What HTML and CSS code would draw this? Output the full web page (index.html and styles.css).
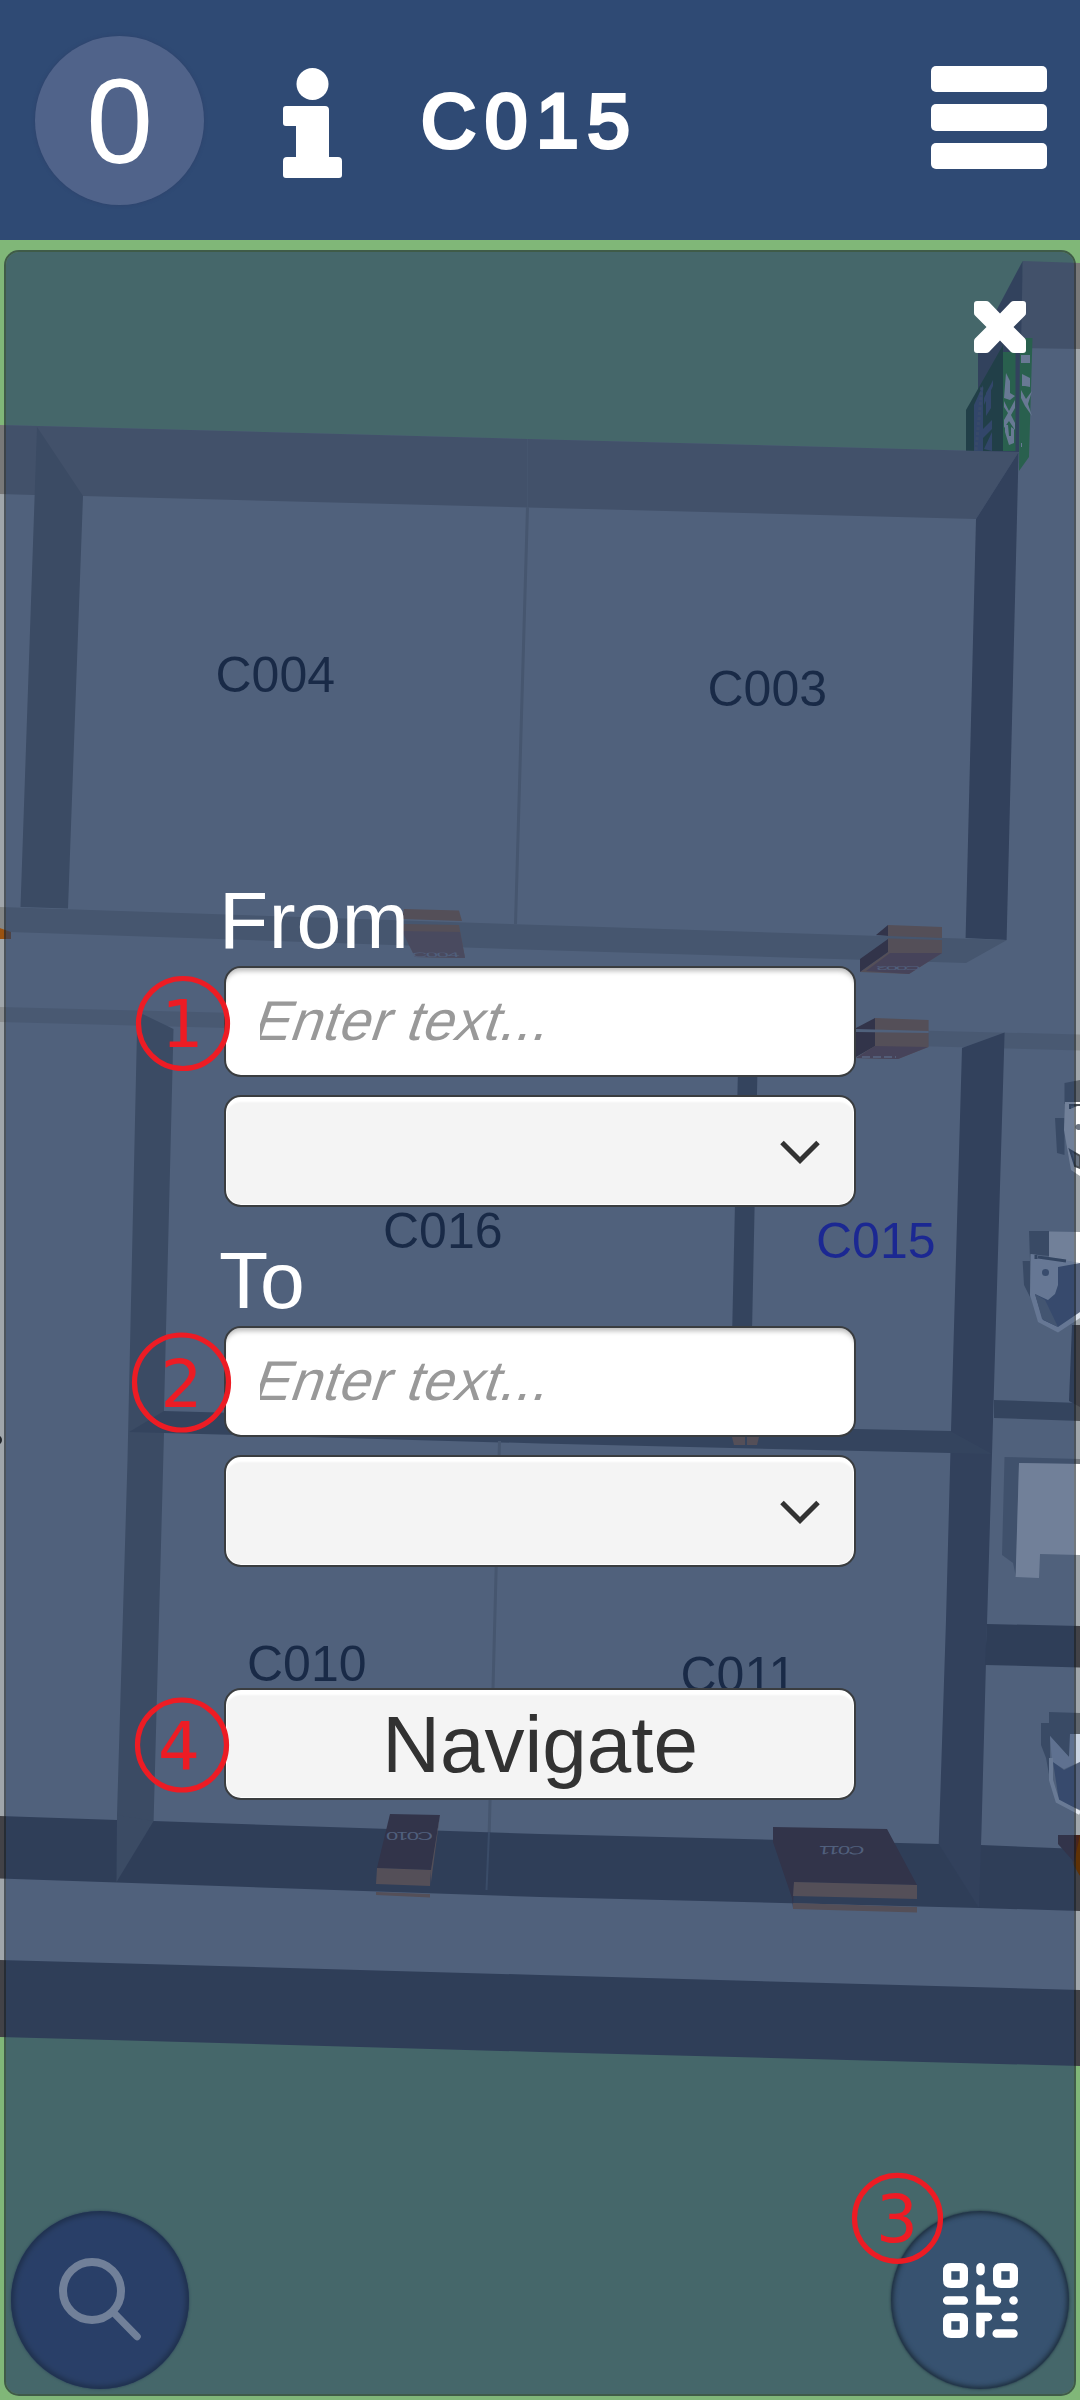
FILE: index.html
```html
<!DOCTYPE html>
<html lang="en">
<head>
<meta charset="utf-8">
<title>Indoor navigation</title>
<link rel="stylesheet" href="styles.css">
</head>
<body>
<header class="topbar">
  <div class="counter">0</div>
  <svg class="info" width="60" height="110" viewBox="0 0 60 110" fill="#fff">
    <circle cx="29.500" cy="16" r="16"/>
    <path d="M3 38H42a4 4 0 0 1 4 4V89H55a4 4 0 0 1 4 4V107a3 3 0 0 1-3 3H3a3 3 0 0 1-3-3V93a4 4 0 0 1 4-4H13V58H3a3 3 0 0 1-3-3V41a3 3 0 0 1 3-3Z"/>
  </svg>
  <h1 class="room">C015</h1>
  <div class="menu"><i></i><i></i><i></i></div>
</header>

<main class="stage">
  <svg class="map" viewBox="0 240 1080 2160" width="1080" height="2160">
    <rect class="grass" y="240" width="1080" height="2160"/>
    <!-- floor -->
    <path class="floor" d="M0 425L1019 452V346L1080 348V1995L0 1963Z"/>
    <!-- upper right block and exit signs -->
    <path class="wall-top" d="M1022.700 261L1080 263V349L1019 348Z"/>
    <path class="wall-mid" d="M1022.700 261L978 345V452H1019Z"/>
    <path class="sign-dark" d="M966 410L1003 345V451H966Z"/>
    <path class="sign-mark" d="M974 405l9-20v66h-9zM986 393l5-9v24l-5 8zM976 436l16-16v9l-16 16zM984 398l9-18v6l-9 19zM984 449l8-17v19z"/>
    <path d="M976 450L982 386" stroke="#5d6675" stroke-width="3" stroke-dasharray="3 2"/>
    <path class="sign" d="M1003 352h12.500V451H1003ZM1020 338H1032.500L1029 457L1019 471Z"/>
    <path class="sign-text" d="M1006 373l4 8v12l5 3-5 4-6-2zM1004 401l5 10 6-11v8l-4 7 4 8v7l-6-9-5 7v-8l4-7-4-6zM1005 425l3 0 1 11 2 0 0-9 3 2v14l-5 2-4-13zM1021 355h9v8h-9zM1022 374l8 4v9l-5-1-3 0zM1021 390l5 9 6-8-4 13 4 12-7-10-4-8zM1021 443h1v4h-1z"/>
    <!-- upper rooms -->
    <path class="wall-top" d="M0 425L1018.600 452L976 519L83 496L34 495L0 494Z"/>
    <path class="wall-left" d="M37 427L83 496L68 908.500L20.500 907Z"/>
    <path class="wall-right" d="M1018.600 452L976 519L965.600 938L1006.600 940Z"/>
    <path d="M527.500 439V507" stroke="#828484"/>
    <path d="M527.500 507L515.500 924" stroke="#838686" stroke-width="3"/>
    <!-- corridor -->
    <path class="low" d="M0 907L540 925L1007 940L966 963L540 950L10 932L0 928Z"/>
    <path class="low2" d="M0 1007L1080 1034.500V1050.500L0 1022Z"/>
    <!-- lower left wall -->
    <path class="wall-left" d="M142.500 1014L173.500 1029L164 1411V1433L153.600 1821L116.500 1882L117 1815L127.500 1460L137 1030Z"/>
    <path class="wall-low" d="M164 1411L856 1429L951 1431L992 1455L950 1453L540 1443.500L164 1433L129 1432Z"/>
    <path class="wall-low" d="M738.500 1045H758L750 1428H730Z"/>
    <path d="M499.500 1441L489 1840L487 1890" fill="none" stroke="#838686" stroke-width="3"/>
    <!-- bottom walls -->
    <path class="wall-bottom" d="M0 1816L117 1820L153.600 1821L540 1834L939 1844L981 1845L1080 1849V1911L979 1908L540 1897L0 1878.500Z"/>
    <path class="wall-left" d="M117 1815L153.600 1821L116.500 1882Z"/>
    <path d="M489 1832L486.500 1890" stroke="#636a72" stroke-width="2"/>
    <path class="wall-bottom" d="M0 1960L540 1975L1080 1990V2066L540 2052L0 2037Z"/>
    <path class="wall-right" d="M1004.600 1032.500L962 1048L951 1431L946 1620L938.700 1844L979 1908L981.500 1830L987 1624L992 1454Z"/>
    <path class="wall-low" d="M950 1431L992 1454L950 1453Z"/>
    <!-- washroom -->
    <path class="wall-low" d="M994 1400L1080 1403V1421L994 1418Z"/>
    <path class="wall-bottom" d="M987 1624L1080 1626V1667.500L985 1665Z"/>
    <path class="wall-bottom" d="M1072 1325H1080V1407L1069 1401Z"/>
    <path class="shade" d="M1064.500 1083L1080 1080V1104H1064.500V1155L1057 1153L1055 1118H1064.500Z"/>
    <path class="white" d="M1065 1102H1080V1176L1071 1170L1064 1130Z"/>
    <path d="M1070 1109V1105H1080M1070 1150L1080 1156V1168L1075 1166Z" fill="#6b7583" stroke="#4c5157" stroke-width="2"/>
    <circle cx="1078.500" cy="1127" r="3" fill="#6f7784"/>
    <path class="shade" d="M1029 1231H1049V1256L1030 1254V1297L1024 1285L1022.600 1261H1030Z"/>
    <path class="white" d="M1049 1231.500L1080 1232V1263L1049 1259Z"/>
    <path d="M1031 1254L1080 1263V1318L1058 1332.500L1038 1322L1030 1295Z" fill="#dfe6ef"/>
    <path d="M1058 1267L1080 1263V1312L1058 1327L1043 1320L1035 1294L1048 1300L1055 1294L1058 1285Z" fill="#596680"/>
    <path d="M1035 1294L1045 1300L1058 1327L1042 1319Z" fill="#7c838e"/>
    <path d="M1036 1255v4M1038 1257L1066 1261" stroke="#4f565f" stroke-width="3"/>
    <circle cx="1045.500" cy="1272.500" r="3.500" fill="#5e6b80"/>
    <path class="shade2" d="M1004.500 1457L1080 1459V1464L1019 1463L1016 1577L1013 1563L1002 1555Z"/>
    <path class="white" d="M1019 1463L1080 1464V1555L1040 1554L1039 1578L1015.600 1577Z"/>
    <path class="shade" d="M1049 1712L1080 1713V1740L1069 1757L1050 1736V1780L1046 1758L1041 1745V1723H1049Z"/>
    <path d="M1050 1736L1069 1757L1070 1734H1080V1762L1064 1769L1052 1762Z" fill="#cbd5e4"/>
    <path d="M1053 1762L1064 1770L1080 1762V1810L1059 1801Z" fill="#596680"/>
    <path d="M1051 1758V1780L1057.500 1801L1080 1813" fill="none" stroke="#e8edf4" stroke-width="4"/>
    <!-- doors -->
    <path class="door" d="M404 909L459 910.500L462 921L402 919ZM404 924L459 925L465 958L415 957L402 930Z"/>
    <path d="M402 931L460 932L465 958L415 957Z" fill="#8e655a"/>
    <text class="plate" transform="translate(412 957) skewX(10) scale(1 .3)" textLength="48">C004</text>
    <path class="door" d="M888 925L942 927V953L909 974L860 972L888 952Z"/>
    <path class="door-dark" d="M888 925L876 935L888 936ZM888 939L860 959V972L888 952Z"/>
    <path d="M866 971L890 953L942 953L909 974Z" fill="#85514a"/>
    <path class="low" d="M876 935.500L942 938V940L876 938Z"/>
    <text class="plate" transform="translate(921 966) rotate(180) scale(1 .25)" textLength="45">C003</text>
    <path class="door" d="M875 1018L928.600 1020V1047L898 1059L856 1058L874 1046Z"/>
    <path class="door-dark" d="M875 1018L856 1028V1057L875 1046Z"/>
    <path d="M856 1058L875 1046L928 1047L898 1059Z" fill="#85514a"/>
    <path class="floor" d="M856 1029L928.600 1031V1033L856 1032Z"/>
    <path d="M862 1057h34" stroke="#b5b5bd" stroke-width="1.500" stroke-dasharray="8 3"/>
    <path class="door" d="M732 1437H745V1445H734ZM747 1437H759L757 1445H747Z"/>
    <path class="door-dark" d="M390 1814L440 1815L431 1870L377 1868Z"/>
    <path class="door" d="M377 1868L431 1870L430 1886L376 1884ZM376 1892L430 1894V1897.500L376 1895ZM440 1815L431 1870V1882Z"/>
    <text class="plate" transform="translate(433 1832) rotate(180) scale(1 .5)" textLength="47">C010</text>
    <path class="door-dark" d="M773 1827L887 1829L917 1885L794 1882L793 1908L792 1898L773 1842Z"/>
    <path class="door" d="M794 1882L917 1885V1899L793 1896ZM793 1903L917 1907V1912.500L793 1909Z"/>
    <text class="plate" transform="translate(865 1845.500) rotate(180) skewX(-8) scale(1 .55)" textLength="46">C011</text>
    <path fill="#9a5210" d="M0 928L11 932V939H0Z"/>
    <path fill="#5f3206" d="M1068 1835H1080V1876L1073 1864Z"/>
    <path class="door-dark" d="M1058 1835H1080L1074 1862L1058 1844Z"/>
    <circle cx="-3" cy="1440" r="5" fill="#202429"/>
    <!-- room names -->
    <g class="names">
      <text x="215.500" y="692">C004</text>
      <text x="707.500" y="705.500">C003</text>
      <text x="383" y="1247.500">C016</text>
      <text class="here" x="816" y="1258">C015</text>
      <text x="247" y="1680.500">C010</text>
      <text x="680.500" y="1692">C011</text>
    </g>
  </svg>

  <div class="round search">
    <svg width="84" height="84" viewBox="0 0 84 84" fill="none" stroke="#fff" stroke-width="8" stroke-linecap="round">
      <circle cx="34" cy="33" r="29"/><path d="M56 55L79 78.500" stroke-width="7.500"/>
    </svg>
  </div>

  <section class="panel">
    <svg class="close" width="52" height="52" viewBox="0 0 52 52" fill="#fff">
      <path d="M3 0H12Q14 0 15 1L26 12.500L37 1Q38 0 40 0H49Q52 0 52 3V12Q52 13.500 51 14.500L39.500 26L51 37.500Q52 38.500 52 40V49Q52 52 49 52H40Q38 52 37 51L26 39.500L15 51Q14 52 12 52H3Q0 52 0 49V40Q0 38.500 1 37.500L12.500 26L1 14.500Q0 13.500 0 12V3Q0 0 3 0Z"/>
    </svg>
    <form class="form">
      <label class="label">From</label>
      <div class="field input"><div class="clip"><span>Enter text...</span></div></div>
      <div class="field select"><svg width="40" height="26" viewBox="0 0 40 26" fill="none" stroke="#323232" stroke-width="5"><path d="M2 2.500L20 20.500L38 2.500"/></svg></div>
      <label class="label second">To</label>
      <div class="field input"><div class="clip"><span>Enter text...</span></div></div>
      <div class="field select"><svg width="40" height="26" viewBox="0 0 40 26" fill="none" stroke="#323232" stroke-width="5"><path d="M2 2.500L20 20.500L38 2.500"/></svg></div>
      <div class="field go">Navigate</div>
    </form>
  </section>

  <div class="round qr">
    <svg width="75" height="75" viewBox="0 0 75 75" fill="none" stroke="#fff" stroke-width="8.500" stroke-linecap="round">
      <path fill="#fff" fill-rule="evenodd" stroke="none" d="M8 0H17Q25 0 25 8V17Q25 25 17 25H8Q0 25 0 17V8Q0 0 8 0ZM8.300 8.300V16.700H16.700V8.300ZM58 0H67Q75 0 75 8V17Q75 25 67 25H58Q50 25 50 17V8Q50 0 58 0ZM58.300 8.300V16.700H66.700V8.300ZM8 50H17Q25 50 25 58V67Q25 75 17 75H8Q0 75 0 67V58Q0 50 8 50ZM8.300 58.300V66.700H16.700V58.300Z"/>
      <path d="M37.500 4.200v4M37.500 25.500v12H54M4.200 37.500h16.600M70.500 37.500h.1M37.500 70.500V54H45M62.500 54h8M53.700 70.500h16.800"/>
    </svg>
  </div>

  <svg class="marks" viewBox="0 240 1080 2160" width="1080" height="2160">
    <ellipse cx="183" cy="1023.500" rx="44.500" ry="45"/>
    <ellipse cx="181.500" cy="1382.500" rx="47" ry="47.500"/>
    <ellipse cx="897.500" cy="2218.300" rx="43" ry="43"/>
    <ellipse cx="182" cy="1745" rx="44.500" ry="45"/>
    <text x="161.500" y="1047">1</text>
    <text x="160.500" y="1406.500">2</text>
    <text x="876" y="2242">3</text>
    <text x="158" y="1769">4</text>
  </svg>
</main>
</body>
</html>
```
FILE: styles.css
```css
* { box-sizing: border-box; }
body {
  margin: 0;
  width: 1080px;
  height: 2400px;
  overflow: hidden;
  font-family: "Liberation Sans", Arial, sans-serif;
  background: #7cb178;
}
.topbar {
  height: 240px;
  display: flex;
  align-items: center;
  padding: 0 33px 0 35px;
  background: #2f4a74;
  color: #fff;
}
.counter {
  width: 169px;
  height: 169px;
  border-radius: 50%;
  background: #50638a;
  box-shadow: 0 0 3px 1px #2f456e;
  font-size: 120px;
  line-height: 171px;
  text-align: center;
}
.info { margin: 5px 0 0 79px; }
.room {
  margin: 1px 0 0 78px;
  font-size: 76px;
  font-weight: 400;
  line-height: 90px;
  letter-spacing: 9px;
  -webkit-text-stroke: 4px #fff;
}
.menu {
  margin: -5px 0 0 auto;
  width: 116px;
  display: flex;
  flex-direction: column;
  gap: 12.500px;
}
.menu i { height: 26.200px; border-radius: 5px; background: #fff; }

.stage { position: relative; height: 2160px; padding: 10px 4px 4px; }
.map, .marks { position: absolute; left: 0; top: 0; display: block; }

.grass { fill: #80b778; }
.floor { fill: #a0a6ab; }
.wall-top { fill: #787878; }
.wall-mid { fill: #4b4e55; }
.wall-left { fill: #646767; }
.wall-right { fill: #4a4a50; }
.wall-low { fill: #515458; }
.wall-bottom { fill: #424247; }
.low { fill: #838686; }
.low2 { fill: #8c8f91; }
.shade { fill: #5f656c; }
.shade2 { fill: #74797f; }
.white { fill: #fff; }
.sign { fill: #33a328; }
.sign-dark { fill: #1a4717; }
.sign-mark { fill: #4b5a78; }
.sign-text { fill: #e4eaf0; }
.door { fill: #ab7245; }
.door-dark { fill: #4a251d; }
.plate { font-size: 22px; fill: #a0a0ac; }
.names { font-size: 50px; fill: #030914; }
.here { fill: #0b03ea; }

.panel {
  position: relative;
  height: 2146px;
  border: 2px solid rgba(20, 30, 40, .6);
  border-radius: 15px;
  background: rgba(37, 60, 98, .65);
  background-clip: padding-box;
}
.close { display: block; margin: 49px 0 0 968px; }
.form {
  width: 632px;
  margin: 529px 0 0 218px;
  display: flex;
  flex-direction: column;
}
.label {
  height: 74px;
  margin: 0 0 10px -5px;
  font-size: 80.500px;
  line-height: 76px;
  letter-spacing: .7px;
  color: #fff;
}
.label.second { margin-top: 35px; }
.field {
  flex: none;
  height: 112px;
  border: 2px solid #3a3d40;
  border-radius: 17px;
  background: #f4f4f4;
  box-shadow: inset 0 6px 2px -1px #fff, inset 0 0 0 1px #fff;
}
.input {
  height: 111px;
  padding: 0 34px;
  background: #fff;
  box-shadow: inset 0 6px 5px -3px #bbb;
}
.clip { overflow: hidden; }
.input span {
  display: inline-block;
  margin-left: -10px;
  font-size: 56px;
  line-height: 106px;
  letter-spacing: .7px;
  white-space: nowrap;
  color: #999;
  transform: skewX(-19deg);
  transform-origin: 0 72px;
}
.select {
  display: flex;
  align-items: center;
  justify-content: flex-end;
  margin-top: 18px;
  padding: 4px 34px 0 0;
}
.go {
  margin-top: 121px;
  font-size: 80px;
  line-height: 109px;
  text-align: center;
  color: #323232;
}

.round {
  position: absolute;
  width: 178px;
  height: 178px;
  top: 1971px;
  border-radius: 50%;
  display: flex;
  align-items: center;
  justify-content: center;
}
.search { left: 11px; background: #334772; box-shadow: inset 0 0 5px 3px #151c26, 0 0 3px #33473a; }
.qr { left: 891px; background: #375270; box-shadow: inset 0 0 5px 2px #1c2c3a, 0 0 3px #1c2c3a; }

.marks ellipse { fill: none; stroke: #ed1c24; stroke-width: 5.200px; }
.marks text { font: 66px "DejaVu Sans", sans-serif; fill: #ed1c24; }
```
